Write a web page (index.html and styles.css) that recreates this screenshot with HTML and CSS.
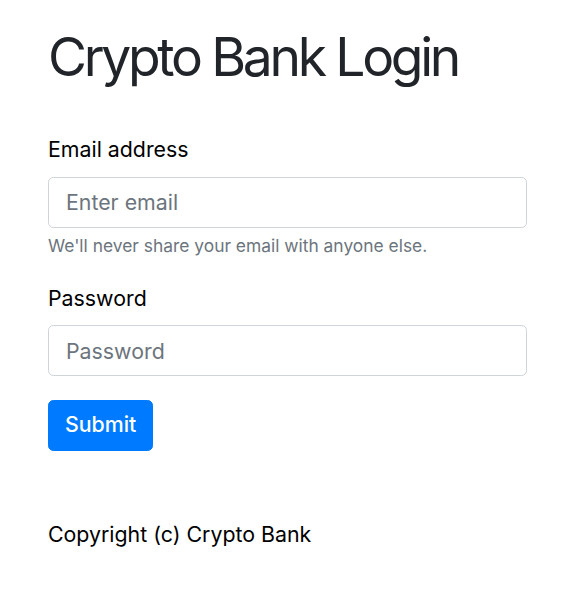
FILE: index.html
```html
<!DOCTYPE html>
<html lang="en">
<head>
<meta charset="utf-8">
<title>Crypto Bank Login</title>
<link rel="stylesheet" href="styles.css">
</head>
<body>
<main class="page">
  <h1 class="title">Crypto Bank Login</h1>
  <form class="login-form">
    <div class="field">
      <label class="field-label" for="email">Email address</label>
      <input class="field-input" id="email" type="email" placeholder="Enter email">
      <small class="field-help">We'll never share your email with anyone else.</small>
    </div>
    <div class="field">
      <label class="field-label" for="password">Password</label>
      <input class="field-input" id="password" type="password" placeholder="Password">
    </div>
    <button class="btn-submit" type="submit">Submit</button>
  </form>
  <footer class="footer">Copyright (c) Crypto Bank</footer>
</main>
</body>
</html>
```
FILE: styles.css
```css
* { box-sizing: border-box; }
html, body {
  margin: 0;
  background: #fff;
}
body {
  font-family: Inter, "Noto Sans", sans-serif;
  font-size: 21.33px;
  line-height: 1.5;
  color: #212529;
}
.page {
  padding: 25px 40px 0 48px;
}
.title {
  font-size: 53.33px;
  line-height: 1.2;
  font-weight: 400;
  letter-spacing: -0.062em;
  margin: 0 0 45px;
  color: #212529;
}
.login-form {
  margin: 0;
}
.field {
  margin-bottom: 23.5px;
}
.field-label {
  display: block;
  margin-bottom: 10.67px;
  color: #000;
}
.field-input {
  display: block;
  width: 100%;
  height: 51px;
  padding: 8px 17px;
  font-family: inherit;
  font-size: 21.33px;
  line-height: 1.5;
  color: #495057;
  background: #fff;
  border: 1.33px solid #ced4da;
  border-radius: 5.33px;
}
.field-input::placeholder {
  color: #6c757d;
  opacity: 1;
}
.field-help {
  display: block;
  margin-top: 5.33px;
  font-size: 17.4px;
  line-height: 1.5;
  color: #6c757d;
}
.btn-submit {
  display: inline-block;
  height: 51px;
  padding: 8px 16px;
  font-family: inherit;
  font-size: 21.33px;
  font-weight: 500;
  line-height: 1.5;
  color: #fff;
  background: #007bff;
  border: 1.33px solid #007bff;
  border-radius: 5.33px;
}
.footer {
  margin-top: 68px;
  color: #000;
}
```
